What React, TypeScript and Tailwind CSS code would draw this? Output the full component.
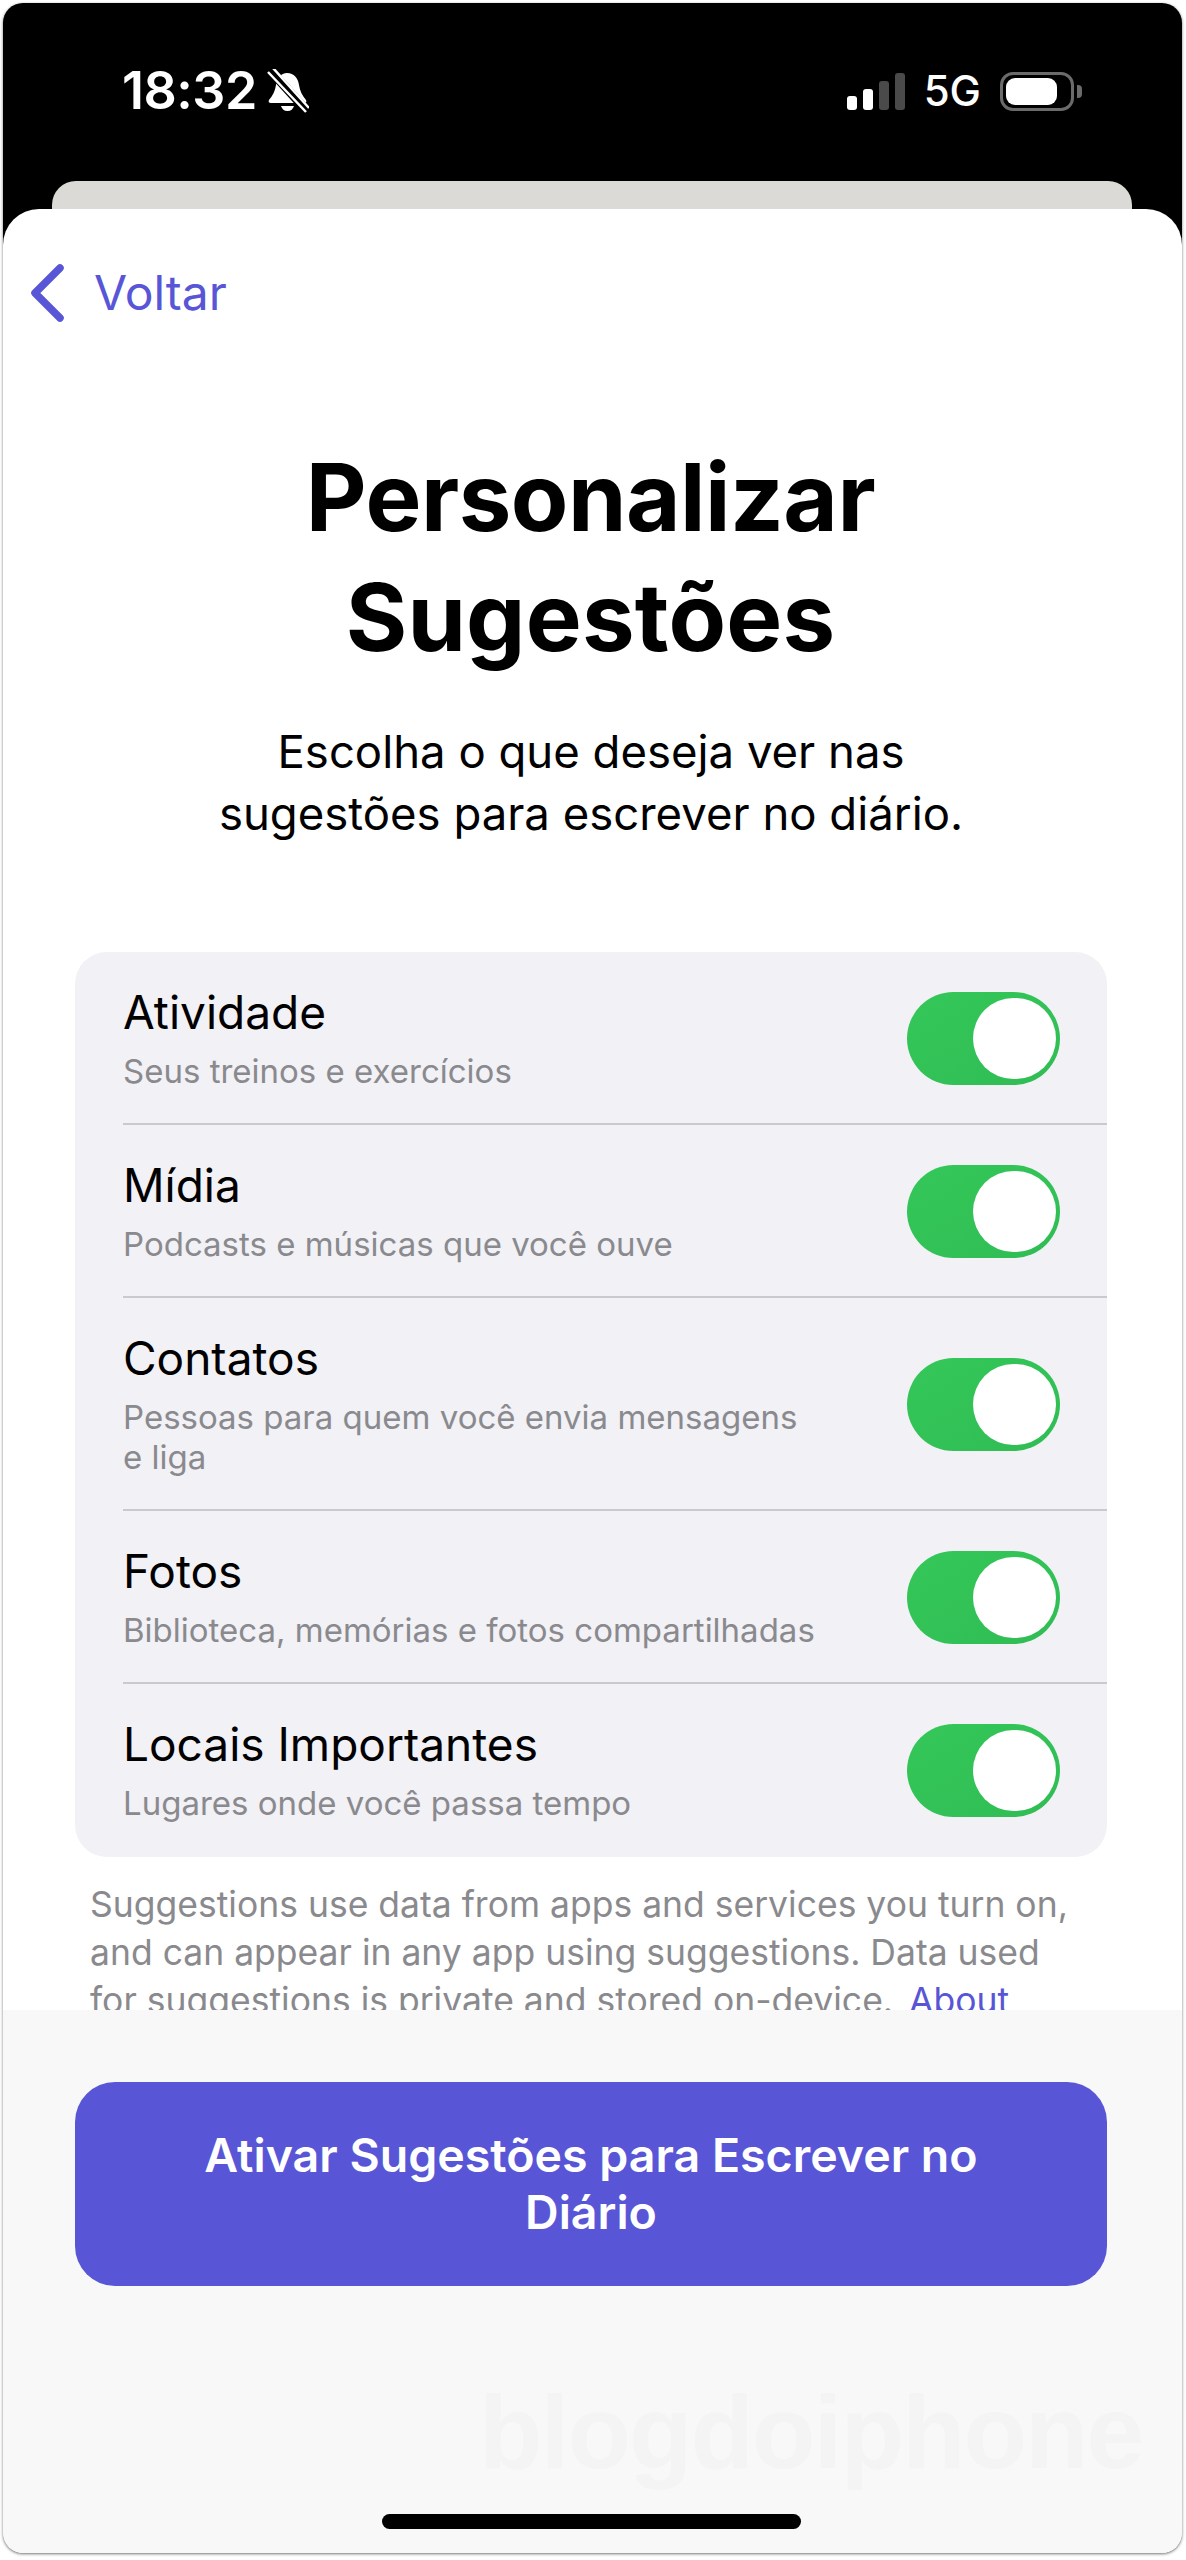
const font = "font-['Inter','Liberation_Sans',sans-serif]";

const rows = [
  { title: 'Atividade', sub: ['Seus treinos e exercícios'] },
  { title: 'Mídia', sub: ['Podcasts e músicas que você ouve'] },
  { title: 'Contatos', sub: ['Pessoas para quem você envia mensagens', 'e liga'] },
  { title: 'Fotos', sub: ['Biblioteca, memórias e fotos compartilhadas'] },
  { title: 'Locais Importantes', sub: ['Lugares onde você passa tempo'] },
];

function MutedBell() {
  return (
    <svg width="42" height="44" viewBox="0 0 42 44" className="ml-[10px]">
      <path d="M20 4c7 0 11 5 12 12 1 6 3 10 7 15 1 2 0 3-2 3H4c-2 0-3-1-2-3 4-5 6-9 7-15 1-7 5-12 11-12z" fill="#fff" />
      <path d="M14 37h13c-1 3-3 5-6.500 5S15 40 14 37z" fill="#fff" />
      <path d="M3 1l37 41" stroke="#000" strokeWidth="9" />
      <path d="M1 3l38 40M6 -1l36 40" stroke="#fff" strokeWidth="2.500" />
    </svg>
  );
}

function Signal() {
  const bars = [
    { h: 'h-[14px]', c: 'bg-white' },
    { h: 'h-[21px]', c: 'bg-white' },
    { h: 'h-[29px]', c: 'bg-[#4a4a4a]' },
    { h: 'h-[37px]', c: 'bg-[#4a4a4a]' },
  ];
  return (
    <div className="flex items-end gap-[6px]">
      {bars.map((b, i) => (
        <div key={i} className={`w-[10px] rounded-[3px] ${b.h} ${b.c}`} />
      ))}
    </div>
  );
}

function Battery() {
  return (
    <div className="flex items-center gap-[3px]">
      <div className="w-[74px] h-[39px] rounded-[13px] border-[3px] border-[#6b6b6b] p-[3px] pr-[14px]">
        <div className="w-full h-full rounded-[9px] bg-white" />
      </div>
      <div className="w-[5px] h-[13px] rounded-r-[4px] bg-[#6b6b6b]" />
    </div>
  );
}

function Toggle() {
  return (
    <div className="mb-[2px] w-[153px] h-[93px] rounded-full bg-gradient-to-br from-[#34c759] to-[#30bd54] flex items-center justify-end pr-[4px]">
      <div className="w-[83px] h-[81px] rounded-full bg-white" />
    </div>
  );
}

export default function App() {
  return (
    <div className={`w-[1186px] h-[2560px] bg-white pl-[3px] pr-[4px] pt-[3px] pb-[7px] ${font}`}>
      <div className="h-full flex flex-col rounded-[20px] overflow-hidden bg-black shadow-[0_1px_3px_rgba(0,0,0,0.55)]">
        <div className="h-[206px] shrink-0 flex flex-col">
          <div className="flex items-center justify-between pl-[119px] pr-[100px] pt-[66px]">
            <div className="flex items-center">
              <span className="text-white text-[52px] leading-[44px] font-semibold tracking-[-0.5px]">18:32</span>
              <MutedBell />
            </div>
            <div className="flex items-center">
              <Signal />
              <span className="text-white text-[42px] leading-[40px] font-medium ml-[19px] mr-[19px]">5G</span>
              <Battery />
            </div>
          </div>
          <div className="mt-auto ml-[49px] mr-[50px] h-[28px] rounded-t-[24px] bg-[#dbdad6]" />
        </div>

        <div className="flex-1 min-h-0 bg-white rounded-t-[36px] flex flex-col overflow-hidden">
          <div className="flex-1 min-h-0 overflow-hidden">
            <div className="flex items-center pl-[25px] pt-[56px] h-[112px]">
              <svg width="38" height="58" viewBox="0 0 38 58" fill="none">
                <path d="M32 4L7 29l25 25" stroke="#5856d6" strokeWidth="7.500" strokeLinecap="round" strokeLinejoin="round" />
              </svg>
              <span className="ml-[28px] text-[48px] leading-[56px] text-[#5856d6]">Voltar</span>
            </div>

            <h1 className="mt-[116px] text-center text-black text-[94px] leading-[120px] font-bold pr-[4px]">
              <span className="tracking-[-0.5px]">Personalizar</span>
              <br />
              <span className="tracking-[0.2px]">Sugestões</span>
            </h1>

            <p className="mt-[44px] text-center text-black text-[45.500px] leading-[62px] pr-[3px]">
              Escolha o que deseja ver nas
              <br />
              sugestões para escrever no diário.
            </p>

            <div className="mt-[107px] ml-[72px] mr-[75px] rounded-[32px] bg-[#f1f1f6]">
              {rows.map((r, i) => (
                <div key={r.title} className="pl-[48px]">
                  <div className={`flex items-center justify-between pr-[47px] pt-[35px] ${i < rows.length - 1 ? 'pb-[32px] border-b-2 border-[#c9c9ce]' : 'pb-[34px]'}`}>
                    <div>
                      <div className="text-black text-[46px] leading-[50px]">{r.title}</div>
                      <div className="mt-[14px] text-[#8a8a8e] text-[33px] leading-[40px]">
                        {r.sub.map((s) => (
                          <div key={s}>{s}</div>
                        ))}
                      </div>
                    </div>
                    <Toggle />
                  </div>
                </div>
              ))}
            </div>

            <p className="mt-[24px] mx-[87px] text-[#8a8a8e] text-[35.500px] leading-[48px] whitespace-nowrap">
              Suggestions use data from apps and services you turn on,
              <br />
              and can appear in any app using suggestions. Data used
              <br />
              for suggestions is private and stored on-device. <span className="ml-[6px] text-[#5856d6]">About</span>
            </p>
          </div>

          <div className="relative h-[543px] shrink-0 bg-[#f8f8f8] px-[72px] pt-[72px]">
            <button className="w-[1032px] h-[204px] rounded-[40px] bg-[#5856d6] text-white text-[46.500px] leading-[57px] font-semibold">
              Ativar Sugestões para Escrever no
              <br />
              Diário
            </button>
            <div className="absolute left-[476px] top-[362px] text-[104px] leading-[120px] font-bold tracking-[-2px] text-[#f4f4f4] font-['Liberation_Sans',sans-serif]">
              blogdoiphone
            </div>
            <div className="absolute left-[379px] bottom-[24px] w-[419px] h-[15px] rounded-full bg-black" />
          </div>
        </div>
      </div>
    </div>
  );
}
